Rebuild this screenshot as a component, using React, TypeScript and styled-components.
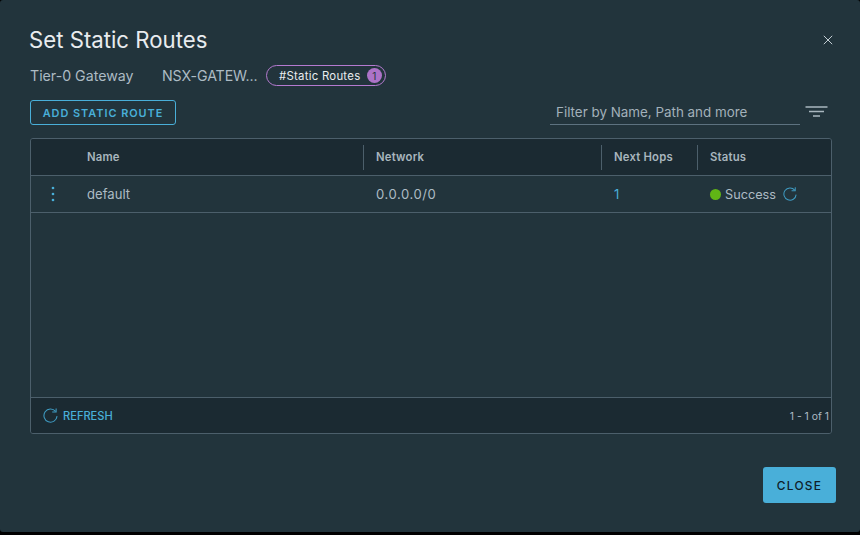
import React from "react";
import styled, { createGlobalStyle } from "styled-components";

const Global = createGlobalStyle`
  html, body { margin: 0; padding: 0; background: #000; width: 860px; height: 535px; overflow: hidden; }
  #root { width: 860px; height: 535px; }
  * { box-sizing: border-box; }
`;

const Modal = styled.div`
  width: 860px;
  height: 532px;
  background: #22343c;
  border-radius: 3px;
  padding: 26px 28px 0 30px;
  display: flex;
  flex-direction: column;
  font-family: Inter, "Noto Sans", sans-serif;
  color: #adbbc4;
`;

const Header = styled.div`
  display: flex;
  align-items: center;
  justify-content: space-between;
  height: 27px;
  margin-left: -1px;
`;

const Title = styled.h1`
  margin: 0;
  font-size: 22.2px;
  font-weight: 400;
  color: #e9ecef;
`;

const CloseX = styled.svg`
  width: 10px;
  height: 10px;
  margin-right: -1px;
  margin-top: 1px;
`;

const Meta = styled.div`
  display: flex;
  align-items: center;
  height: 21px;
  margin-top: 12px;
  font-size: 14.2px;
  color: #adbbc4;
`;

const MetaLabel = styled.span`
  width: 132px;
`;

const MetaValue = styled.span`
  width: 104px;
  white-space: nowrap;
  letter-spacing: -0.1px;
`;

const Pill = styled.div`
  display: flex;
  align-items: center;
  justify-content: space-between;
  width: 120px;
  height: 21px;
  padding: 0 3px 0 12px;
  border: 1px solid #b57ad0;
  border-radius: 11px;
  font-size: 11.4px;
  letter-spacing: 0.25px;
  color: #e9ecef;
`;

const PillCount = styled.span`
  display: flex;
  align-items: center;
  justify-content: center;
  width: 15px;
  height: 15px;
  border-radius: 50%;
  background: #ad73c8;
  color: #22343c;
  font-size: 10px;
`;

const Toolbar = styled.div`
  display: flex;
  align-items: center;
  justify-content: space-between;
  height: 25px;
  margin-top: 14px;
`;

const AddButton = styled.button`
  width: 146px;
  height: 25px;
  padding: 0;
  background: transparent;
  border: 1px solid #49afd9;
  border-radius: 3px;
  color: #49afd9;
  font-family: inherit;
  font-size: 10.9px;
  font-weight: 600;
  letter-spacing: 0.98px;
`;

const FilterGroup = styled.div`
  display: flex;
  align-items: center;
`;

const FilterField = styled.div`
  width: 250px;
  height: 25px;
  padding: 0 0 1px 6px;
  display: flex;
  align-items: center;
  border-bottom: 1px solid #5d7280;
  font-size: 13.4px;
  color: #a3b1ba;
`;

const FilterIcon = styled.svg`
  width: 23px;
  height: 12px;
  margin-left: 5px;
  margin-right: 4px;
  margin-top: -2px;
`;

const Grid = styled.div`
  margin-top: 13px;
  width: 802px;
  height: 296px;
  border: 1px solid #4c5f6b;
  border-radius: 3px;
  display: flex;
  flex-direction: column;
  overflow: hidden;
`;

const columns = "44px 288px 1fr 96px 134px";

const HeadRow = styled.div`
  display: grid;
  grid-template-columns: ${columns};
  height: 37px;
  flex: none;
  background: #1b2a32;
  border-bottom: 1px solid #4c5f6b;
  align-items: center;
`;

const HeadCell = styled.div<{ $divided?: boolean }>`
  height: 25px;
  display: flex;
  align-items: center;
  padding-left: 12px;
  font-size: 11.3px;
  font-weight: 600;
  letter-spacing: 0.2px;
  color: #a9b6be;
  border-left: ${(p) => (p.$divided ? "1px solid #4c5f6b" : "none")};
`;

const BodyRow = styled.div`
  display: grid;
  grid-template-columns: ${columns};
  height: 37px;
  flex: none;
  border-bottom: 1px solid #4c5f6b;
  align-items: center;
  font-size: 13.1px;
  color: #adbbc4;
`;

const BodyCell = styled.div<{ $inset?: number }>`
  display: flex;
  align-items: center;
  padding-left: ${(p) => p.$inset ?? 12}px;
`;

const NetworkValue = styled.span`
  letter-spacing: 0.55px;
`;

const StatusLabel = styled.span`
  font-size: 12.7px;
`;

const MenuCell = styled.div`
  display: flex;
  justify-content: center;
`;

const Hop = styled.span`
  color: #49afd9;
`;

const Dot = styled.span`
  width: 11px;
  height: 11px;
  border-radius: 50%;
  background: #60b515;
  margin-right: 4px;
`;

const RefreshIcon = styled.svg<{ $size: number }>`
  width: ${(p) => p.$size}px;
  height: ${(p) => p.$size}px;
  flex: none;
`;

const StatusRefresh = styled.span`
  display: flex;
  margin-left: 7px;
`;

const Spacer = styled.div`
  flex: 1;
`;

const Footer = styled.div`
  height: 36px;
  flex: none;
  background: #1b2a32;
  border-top: 1px solid #4c5f6b;
  display: flex;
  align-items: center;
  justify-content: space-between;
  padding: 0 2px 0 12px;
`;

const RefreshLink = styled.div`
  display: flex;
  align-items: center;
  gap: 5px;
  font-size: 11.1px;
  font-weight: 500;
  color: #49afd9;
`;

const RefreshText = styled.span`
  margin-top: 1px;
`;

const Pagination = styled.div`
  font-size: 10.4px;
  margin-top: 1px;
  color: #adbbc4;
`;

const Actions = styled.div`
  display: flex;
  justify-content: flex-end;
  margin-top: 33px;
  margin-right: -4px;
`;

const CloseButton = styled.button`
  width: 73px;
  height: 36px;
  padding: 0;
  background: #49afd9;
  border: none;
  border-radius: 3px;
  color: #0f2029;
  font-family: inherit;
  font-size: 11.9px;
  font-weight: 500;
  letter-spacing: 1.25px;
`;

const Refresh = ({ size }: { size: number }) => (
  <RefreshIcon $size={size} viewBox="0 0 16 16" fill="none" stroke="#3f9bc2" strokeWidth="1.15">
    <path d="M13.4 3.6A7 7 0 1 0 15 8.7" />
    <path d="M9.8 4.2h4.2V0.4" />
  </RefreshIcon>
);

export default function App() {
  return (
    <>
      <Global />
      <Modal>
        <Header>
          <Title>Set Static Routes</Title>
          <CloseX viewBox="0 0 10 10" stroke="#c3ced4" strokeWidth="1" fill="none">
            <path d="M0.8 0.8l8.4 8.4M9.2 0.8l-8.4 8.4" />
          </CloseX>
        </Header>
        <Meta>
          <MetaLabel>Tier-0 Gateway</MetaLabel>
          <MetaValue>NSX-GATEW...</MetaValue>
          <Pill>
            #Static Routes
            <PillCount>1</PillCount>
          </Pill>
        </Meta>
        <Toolbar>
          <AddButton>ADD STATIC ROUTE</AddButton>
          <FilterGroup>
            <FilterField>Filter by Name, Path and more</FilterField>
            <FilterIcon viewBox="0 0 23 12" stroke="#a9b6be" strokeWidth="1.3" fill="none">
              <path d="M0.5 1h22M4 5.5h15M8 10h7" />
            </FilterIcon>
          </FilterGroup>
        </Toolbar>
        <Grid>
          <HeadRow>
            <HeadCell />
            <HeadCell>Name</HeadCell>
            <HeadCell $divided>Network</HeadCell>
            <HeadCell $divided>Next Hops</HeadCell>
            <HeadCell $divided>Status</HeadCell>
          </HeadRow>
          <BodyRow>
            <MenuCell>
              <svg width="4" height="16" viewBox="0 0 4 16" fill="#49afd9">
                <circle cx="2" cy="2" r="1.35" />
                <circle cx="2" cy="8" r="1.35" />
                <circle cx="2" cy="14" r="1.35" />
              </svg>
            </MenuCell>
            <BodyCell>default</BodyCell>
            <BodyCell $inset={13}>
              <NetworkValue>0.0.0.0/0</NetworkValue>
            </BodyCell>
            <BodyCell $inset={13}>
              <Hop>1</Hop>
            </BodyCell>
            <BodyCell $inset={13}>
              <Dot />
              <StatusLabel>Success</StatusLabel>
              <StatusRefresh>
                <Refresh size={14} />
              </StatusRefresh>
            </BodyCell>
          </BodyRow>
          <Spacer />
          <Footer>
            <RefreshLink>
              <Refresh size={15} />
              <RefreshText>REFRESH</RefreshText>
            </RefreshLink>
            <Pagination>1 - 1 of 1</Pagination>
          </Footer>
        </Grid>
        <Actions>
          <CloseButton>CLOSE</CloseButton>
        </Actions>
      </Modal>
    </>
  );
}
